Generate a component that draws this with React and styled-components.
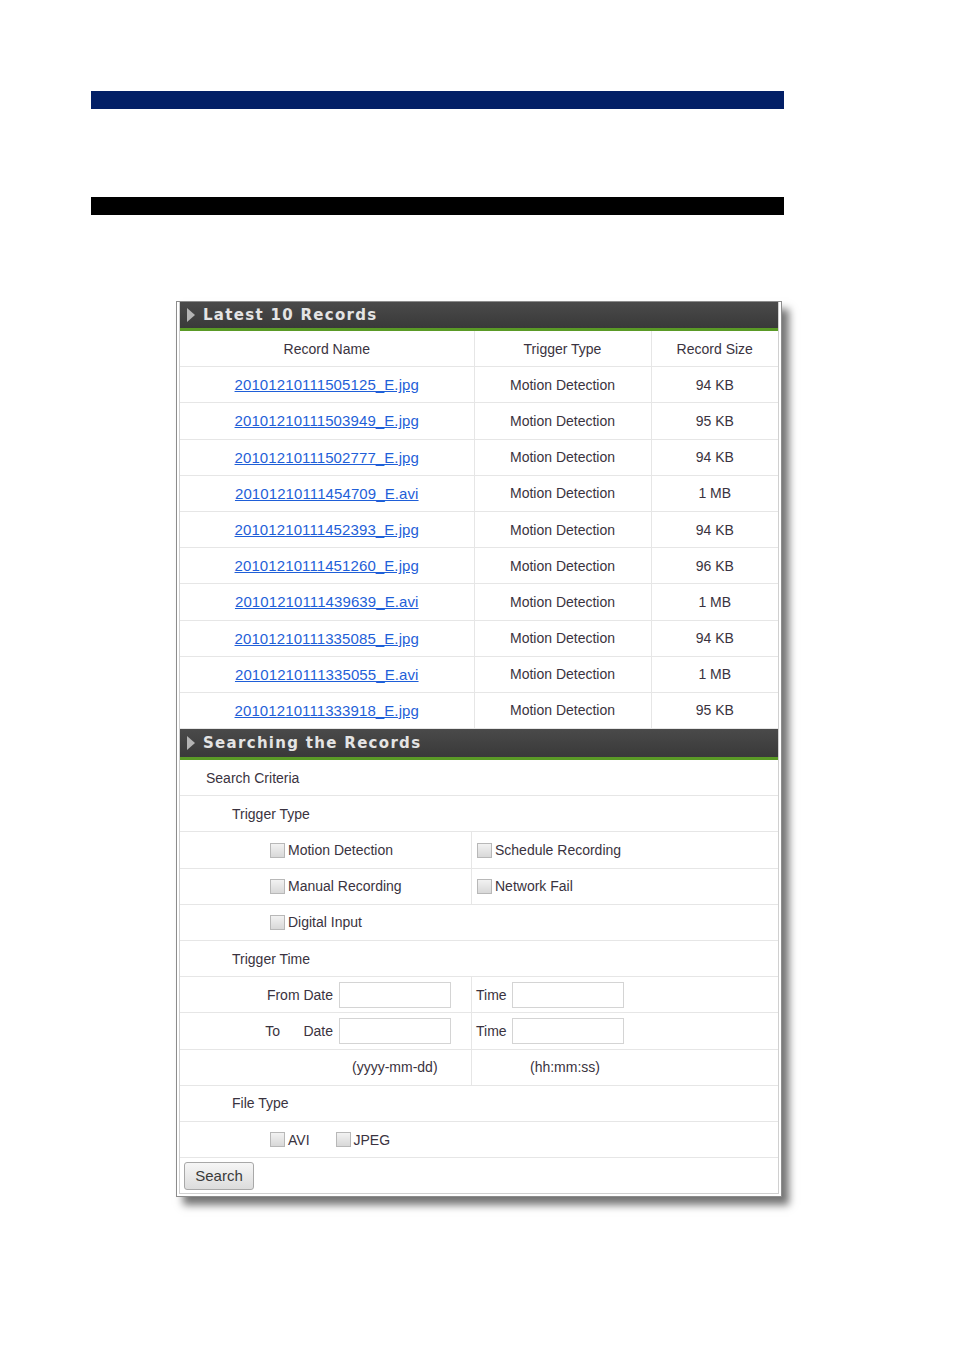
import styled, { createGlobalStyle } from "styled-components";

const GlobalStyle = createGlobalStyle`
  body {
    margin: 0;
    background: #fff;
    font-family: "Liberation Sans", Arial, sans-serif;
  }
`;

const Page = styled.div`
  width: 954px;
  min-height: 1350px;
  padding-top: 91px;
  box-sizing: border-box;
`;

const Bar = styled.div`
  margin-left: 91px;
  width: 693px;
  height: 18px;
  background: ${(p) => p.color};
  margin-bottom: ${(p) => p.gap}px;
`;

const Panel = styled.div`
  margin-left: 176px;
  width: 606px;
  box-sizing: border-box;
  border: 1px solid #8c8c8c;
  padding: 0 2px 2px;
  background: #fff;
  box-shadow: 7px 8px 8px rgba(0, 0, 0, 0.55);
`;

const Inner = styled.div`
  border: 1px solid #d0d0d0;
  border-top: none;
`;

const Head = styled.div`
  display: flex;
  align-items: center;
  gap: 8px;
  height: ${(p) => p.h}px;
  padding-left: 7px;
  background: linear-gradient(#4a4a4a, #393939);
  border-bottom: 3px solid #5a9a26;
  font-family: "DejaVu Sans", sans-serif;
  font-weight: bold;
  font-size: 15px;
  letter-spacing: 1.3px;
  color: #e4e4e4;
`;

const Arrow = styled.span`
  width: 0;
  height: 0;
  border-top: 7px solid transparent;
  border-bottom: 7px solid transparent;
  border-left: 8px solid #b4b4b4;
`;

const Table = styled.table`
  width: 100%;
  border-collapse: collapse;
  table-layout: fixed;
  font-size: 14px;
  color: #3a3340;
`;

const Cell = styled.td`
  height: 35.2px;
  padding: 0;
  text-align: center;
  border-bottom: 1px solid #e6e6e6;
  border-left: 1px solid #e6e6e6;
  &:first-child {
    border-left: none;
  }
`;

const FileLink = styled.a`
  font-size: 15px;
  color: #1f5fd8;
  text-decoration: underline;
  letter-spacing: 0.1px;
`;

const Row = styled.div`
  display: flex;
  align-items: center;
  height: 35.2px;
  border-bottom: 1px solid #e6e6e6;
  font-size: 14px;
  color: #3a3340;
  padding-left: ${(p) => p.indent || 0}px;
`;

const Half = styled.div`
  display: flex;
  align-items: center;
  height: 100%;
  box-sizing: border-box;
  width: ${(p) => (p.first ? "292px" : "auto")};
  flex: ${(p) => (p.first ? "none" : "1")};
  border-right: ${(p) => (p.first ? "1px solid #e6e6e6" : "none")};
  padding-left: ${(p) => p.pl || 0}px;
  padding-right: ${(p) => p.pr || 0}px;
  justify-content: ${(p) => p.justify || "flex-start"};
  gap: ${(p) => p.gap || 0}px;
`;

const Check = styled.label`
  display: flex;
  align-items: center;
  gap: 3px;
  margin-right: ${(p) => p.mr || 0}px;
`;

const Box = styled.input.attrs({ type: "checkbox" })`
  appearance: none;
  margin: 0;
  width: 15px;
  height: 15px;
  border: 1px solid #b8b8b8;
  background: linear-gradient(#f2f2f2, #d8d8d8);
  box-sizing: border-box;
`;

const TextInput = styled.input`
  width: 112px;
  height: 26px;
  box-sizing: border-box;
  border: 1px solid #d4d4d4;
  background: #fff;
  margin: 0;
`;

const SearchButton = styled.button`
  width: 70px;
  height: 28px;
  margin-left: 4px;
  border: 1px solid #a8a8a8;
  border-radius: 3px;
  background: linear-gradient(#f6f6f6, #dcdcdc);
  font-family: "Liberation Sans", Arial, sans-serif;
  font-size: 15px;
  color: #3a3a3a;
  padding: 0;
`;

const ButtonRow = styled.div`
  display: flex;
  align-items: center;
  height: 35px;
`;

const records = [
  ["20101210111505125_E.jpg", "94 KB"],
  ["20101210111503949_E.jpg", "95 KB"],
  ["20101210111502777_E.jpg", "94 KB"],
  ["20101210111454709_E.avi", "1 MB"],
  ["20101210111452393_E.jpg", "94 KB"],
  ["20101210111451260_E.jpg", "96 KB"],
  ["20101210111439639_E.avi", "1 MB"],
  ["20101210111335085_E.jpg", "94 KB"],
  ["20101210111335055_E.avi", "1 MB"],
  ["20101210111333918_E.jpg", "95 KB"],
];

export default function App() {
  return (
    <Page>
      <GlobalStyle />
      <Bar color="#021f66" gap={88} />
      <Bar color="#000" gap={86} />
      <Panel>
        <Inner>
          <Head h={26}>
            <Arrow />
            Latest 10 Records
          </Head>
          <Table>
            <colgroup>
              <col style={{ width: 294 }} />
              <col style={{ width: 177 }} />
              <col />
            </colgroup>
            <tbody>
              <tr>
                <Cell>Record Name</Cell>
                <Cell>Trigger Type</Cell>
                <Cell>Record Size</Cell>
              </tr>
              {records.map(([name, size]) => (
                <tr key={name}>
                  <Cell>
                    <FileLink href="#">{name}</FileLink>
                  </Cell>
                  <Cell>Motion Detection</Cell>
                  <Cell>{size}</Cell>
                </tr>
              ))}
            </tbody>
          </Table>
          <Head h={28}>
            <Arrow />
            Searching the Records
          </Head>
          <Row indent={26}>Search Criteria</Row>
          <Row indent={52}>Trigger Type</Row>
          <Row>
            <Half first pl={90}>
              <Check>
                <Box />
                Motion Detection
              </Check>
            </Half>
            <Half pl={5}>
              <Check>
                <Box />
                Schedule Recording
              </Check>
            </Half>
          </Row>
          <Row>
            <Half first pl={90}>
              <Check>
                <Box />
                Manual Recording
              </Check>
            </Half>
            <Half pl={5}>
              <Check>
                <Box />
                Network Fail
              </Check>
            </Half>
          </Row>
          <Row indent={90}>
            <Check>
              <Box />
              Digital Input
            </Check>
          </Row>
          <Row indent={52}>Trigger Time</Row>
          <Row>
            <Half first justify="flex-end" pr={20} gap={6}>
              From Date
              <TextInput />
            </Half>
            <Half pl={4} gap={5}>
              Time
              <TextInput />
            </Half>
          </Row>
          <Row>
            <Half first justify="flex-end" pr={20} gap={6}>
              <span>
                To&nbsp;&nbsp;&nbsp;&nbsp;&nbsp;&nbsp;Date
              </span>
              <TextInput />
            </Half>
            <Half pl={4} gap={5}>
              Time
              <TextInput />
            </Half>
          </Row>
          <Row>
            <Half first pl={172}>
              (yyyy-mm-dd)
            </Half>
            <Half pl={58}>(hh:mm:ss)</Half>
          </Row>
          <Row indent={52}>File Type</Row>
          <Row indent={90}>
            <Check mr={26}>
              <Box />
              AVI
            </Check>
            <Check>
              <Box />
              JPEG
            </Check>
          </Row>
          <ButtonRow>
            <SearchButton>Search</SearchButton>
          </ButtonRow>
        </Inner>
      </Panel>
    </Page>
  );
}
